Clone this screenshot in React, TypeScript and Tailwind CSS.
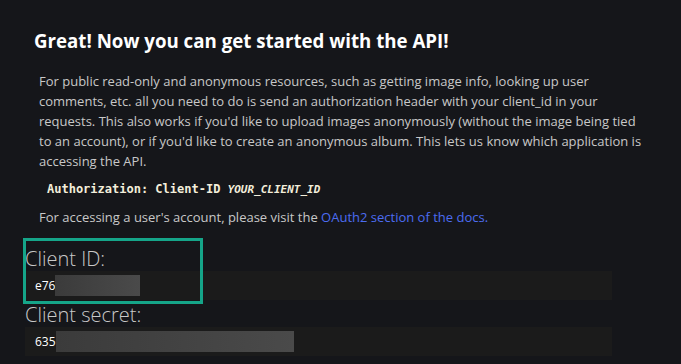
import React from "react";

const SANS = { fontFamily: "'Open Sans', 'Noto Sans', sans-serif" };

function Field({ label, prefix, blurWidth }: { label: string; prefix: string; blurWidth: number }) {
  return (
    <div className="flex flex-col">
      <label className="text-[20px] font-light leading-[28px] text-[#c9c9c9]">{label}</label>
      <div className="-mt-[2px] flex h-[29px] w-[587px] items-center bg-[#1b1b1b] pl-[10px]">
        <span className="text-[12px] font-medium text-white">{prefix}</span>
        <span
          className="h-[21px] bg-gradient-to-r from-[#3b3b3b] to-[#4a4a4a]"
          style={{ width: blurWidth }}
        />
      </div>
    </div>
  );
}

export default function App() {
  return (
    <div className="relative h-[364px] w-[681px] overflow-hidden bg-[#15161a]" style={SANS}>
      <div className="pl-[25px] pt-[28px]">
        <h1 className="ml-[9px] text-[18.7px] font-bold leading-[26px] text-white">
          Great! Now you can get started with the API!
        </h1>

        <div className="ml-[14px] mt-[17px] w-[610px] text-[13px] leading-[20px] text-[#c8c8c8]">
          <p>
            For public read-only and anonymous resources, such as getting image info, looking up user
            comments, etc. all you need to do is send an authorization header with your client_id in your
            requests. This also works if you'd like to upload images anonymously (without the image being tied
            to an account), or if you'd like to create an anonymous album. This lets us know which application is
            accessing the API.
          </p>
          <pre
            className="ml-[8px] mt-[9px] text-[12px] font-bold leading-[18px] text-[#f3eedb]"
            style={{ fontFamily: "'DejaVu Sans Mono', monospace" }}
          >
            Authorization: Client-ID <i className="text-[11px]">YOUR_CLIENT_ID</i>
          </pre>
          <p className="mt-[8px]">
            For accessing a user's account, please visit the{" "}
            <a className="text-[#4c6cf0]">OAuth2 section of the docs.</a>
          </p>
        </div>

        <div className="mt-[18px] flex flex-col gap-[1px]">
          <Field label="Client ID:" prefix="e76" blurWidth={85} />
          <Field label="Client secret:" prefix="635" blurWidth={238} />
        </div>
      </div>

      <div className="absolute left-[23px] top-[238px] h-[66px] w-[180px] border-[3px] border-[#15a589]" />
    </div>
  );
}
